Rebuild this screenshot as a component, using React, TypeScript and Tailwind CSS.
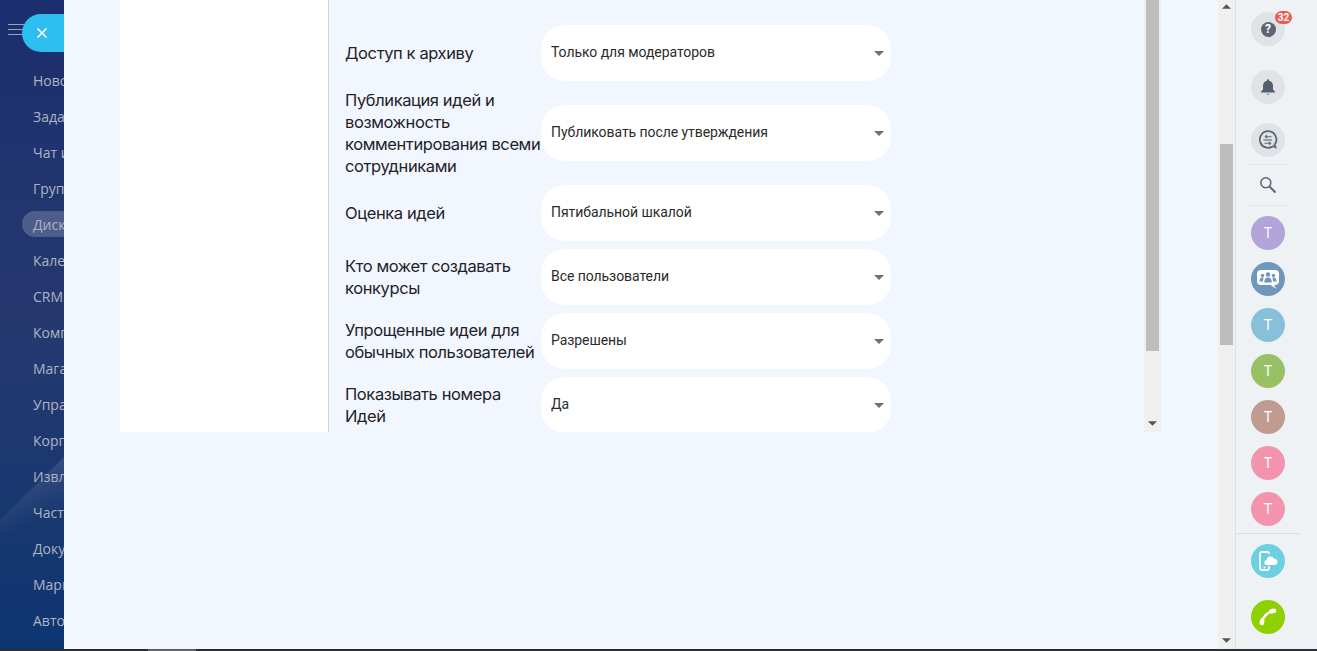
const navItems = ["Новости", "Задачи", "Чат и звонки", "Группы", "Диск", "Календарь", "CRM", "Компания", "Магазин", "Управление", "Корпорация", "Извлечение", "Частые", "Документы", "Маркетинг", "Автоматизация"];

const rows = [
  { label: "Доступ к архиву", value: "Только для модераторов" },
  { label: "Публикация идей и возможность комментирования всеми сотрудниками", value: "Публиковать после утверждения" },
  { label: "Оценка идей", value: "Пятибальной шкалой" },
  { label: "Кто может создавать конкурсы", value: "Все пользователи" },
  { label: "Упрощенные идеи для обычных пользователей", value: "Разрешены" },
  { label: "Показывать номера Идей", value: "Да" },
];

function Tri({ up, className }: { up?: boolean; className: string }) {
  return (
    <svg width="10" height="5" viewBox="0 0 10 5" className={className}>
      <path d={up ? "M5 0L10 5H0Z" : "M0 0H10L5 5Z"} fill="currentColor" />
    </svg>
  );
}

function Avatar({ color }: { color: string }) {
  return (
    <div className={`w-[34px] h-[34px] shrink-0 rounded-full flex items-center justify-center text-white text-[14px] mb-3 ${color}`}>
      Т
    </div>
  );
}

export default function App() {
  return (
    <div className="h-[651px] w-[1317px] flex flex-col overflow-hidden bg-[#f2f6fe] font-['Roboto',sans-serif]">
      <div className="flex h-[649px]">
        {/* left menu */}
        <aside className="relative w-16 shrink-0 overflow-hidden bg-gradient-to-b from-[#1b2e6d] via-[#25396f] to-[#0c3670] font-['Open_Sans',sans-serif]">
          <svg className="absolute left-0 top-[437px]" width="64" height="100" viewBox="0 0 64 100">
            <defs>
              <linearGradient id="shine" x1="0" y1="0" x2="0.4" y2="1">
                <stop offset="0.3" stopColor="#ffffff" stopOpacity="0.12" />
                <stop offset="0.9" stopColor="#ffffff" stopOpacity="0" />
              </linearGradient>
            </defs>
            <path d="M0 83L64 20V100H0Z" fill="url(#shine)" />
          </svg>
          <div className="relative flex items-center h-[62px]">
            <div className="ml-2 w-4 flex flex-col gap-1 -mt-1">
              <div className="h-px bg-[#9aa3bb]" />
              <div className="h-px bg-[#9aa3bb]" />
              <div className="h-px bg-[#9aa3bb]" />
            </div>
            <div className="absolute left-[22px] top-[14px] w-[60px] h-[38px] rounded-full bg-[#2ebef0] flex items-center pl-[14px]">
              <svg width="12" height="12" viewBox="0 0 12 12">
                <path d="M1.5 1.5L10.5 10.5M10.5 1.5L1.5 10.5" stroke="#fff" strokeWidth="1.6" />
              </svg>
            </div>
          </div>
          <nav className="relative flex flex-col">
            {navItems.map((n) => (
              <div key={n} className="relative h-9 flex items-center pl-[33px] text-[14px] text-[#adb3c3] whitespace-nowrap">
                {n === "Диск" && <div className="absolute left-[22px] top-[5px] w-[60px] h-[26px] rounded-full bg-white/20" />}
                <span className="relative">{n}</span>
              </div>
            ))}
          </nav>
        </aside>

        {/* center */}
        <main className="flex-1 min-w-0">
          <div className="ml-14 w-[1041px] h-[432px] flex">
            <div className="w-[208px] bg-white border-r border-[#cfd5dd] box-content" />
            <div className="flex-1 min-w-0 overflow-hidden pl-[16px] pt-[25px] flex flex-col gap-2">
              {rows.map((r) => (
                <div key={r.label} className="flex items-center shrink-0">
                  <div className="w-[196px] shrink-0 text-[16.5px] leading-[22px] text-[#1f2229] font-['Inter',sans-serif] tracking-[-0.4px]">{r.label}</div>
                  <div className="w-[350px] h-14 rounded-3xl bg-white flex items-center justify-between pl-[10px] pr-[7px] text-[14px] text-[#2b2b2b] tracking-[-0.06px]">
                    <span className="-mt-px">{r.value}</span>
                    <Tri className="text-[#6f6f6f] mt-px" />
                  </div>
                </div>
              ))}
            </div>
            <div className="w-[17px] shrink-0 bg-[#f0f0f0] relative">
              <div className="mx-[2px] w-[13px] h-[351px] bg-[#bdbdbd]" />
              <Tri className="absolute left-1 bottom-[6px] text-[#555] w-[9px]" />
            </div>
          </div>
        </main>

        {/* page scrollbar */}
        <div className="w-[17px] shrink-0 bg-[#f0f0f0] flex flex-col items-center relative">
          <Tri up className="text-[#555] mt-[4px] w-[9px]" />
          <div className="absolute left-[2px] top-[144px] w-[13px] h-[201px] bg-[#bdbdbd]" />
          <Tri className="absolute left-1 bottom-[6px] text-[#555] w-[9px]" />
        </div>

        {/* right bar */}
        <aside className="w-[82px] shrink-0 bg-[#eef2f4] border-l border-[#dde1e4] flex flex-col">
          <div className="w-[64px] flex flex-col items-center pt-3">
            <div className="relative w-[34px] h-[34px] rounded-full bg-[#dfe3e6] flex items-center justify-center mb-6">
              <div className="w-[15px] h-[15px] rounded-full bg-[#5b6573] text-white text-[12px] font-bold flex items-center justify-center">?</div>
              <div className="absolute -right-[7px] -top-[1px] h-[13px] w-[17px] text-center rounded-full bg-[#ee5a4e] text-white text-[10px] font-bold leading-[13px]">32</div>
            </div>
            <div className="w-[34px] h-[34px] rounded-full bg-[#dfe3e6] flex items-center justify-center mb-[18px]">
              <svg width="16" height="18" viewBox="0 0 16 18">
                <path d="M8 1.2a1.1 1.1 0 0 1 1.1 1.1v.5C11.6 3.4 13 5.400 13 8v3.500l2 2.200V14.500H1V13.700l2-2.200V8c0-2.600 1.400-4.600 3.900-5.200v-.5A1.100 1.100 0 0 1 8 1.200Z" fill="#545e6e" />
                <path d="M6.500 15.700h3L8 17Z" fill="#545e6e" />
              </svg>
            </div>
            <div className="w-[34px] h-[34px] rounded-full bg-[#dfe3e6] flex items-center justify-center mt-px">
              <svg width="20" height="20" viewBox="0 0 20 20" fill="none" stroke="#5b6573">
                <path d="M10 1.200a8.300 8.300 0 1 0 5 15l2.500 1-.9-2.600A8.300 8.300 0 0 0 10 1.200Z" strokeWidth="1.700" />
                <path d="M13.500 6.700H7.500M9 5.200L7.300 6.700L9 8.200" strokeWidth="1.100" />
                <path d="M5.500 10H14" strokeWidth="1.100" />
                <path d="M6.500 13.300H12.500M11 11.800L12.700 13.300L11 14.800" strokeWidth="1.100" />
              </svg>
            </div>
            <div className="w-[42px] h-px bg-[#e2e6e9] mt-[7px]" />
            <div className="h-10 flex items-center">
              <svg width="18" height="18" viewBox="0 0 18 18" fill="none" stroke="#5b6573">
                <circle cx="6.800" cy="6.800" r="5" strokeWidth="1.500" />
                <path d="M10.500 10.500L16.500 16.500" strokeWidth="2" />
              </svg>
            </div>
            <div className="w-[42px] h-px bg-[#e2e6e9] mb-[10px]" />
            <Avatar color="bg-[#b0a4d8]" />
            <div className="w-[34px] h-[34px] shrink-0 rounded-full bg-[#6f97be] flex items-center justify-center mb-3">
              <svg width="26" height="24" viewBox="0 0 26 24">
                <path d="M6 3h14a4 4 0 0 1 4 4v7a4 4 0 0 1-4 4h-1l2.500 4-6-4H6a4 4 0 0 1-4-4V7a4 4 0 0 1 4-4Z" fill="#fff" />
                <g fill="#6f97be">
                  <circle cx="13" cy="7.500" r="2.200" />
                  <path d="M9.300 15.500c0-3.400 1-5 3.700-5s3.700 1.600 3.700 5Z" />
                  <circle cx="7.500" cy="8.500" r="1.700" />
                  <path d="M4.500 14.500c0-2.800.8-4 3-4 .5 0 1 .1 1.300.3-.6 1-.9 2.200-.9 3.700Z" />
                  <circle cx="18.500" cy="8.500" r="1.700" />
                  <path d="M21.500 14.500c0-2.800-.8-4-3-4-.5 0-1 .1-1.300.3.600 1 .9 2.200.9 3.700Z" />
                </g>
              </svg>
            </div>
            <Avatar color="bg-[#87c0d8]" />
            <Avatar color="bg-[#98c064]" />
            <Avatar color="bg-[#c09c90]" />
            <Avatar color="bg-[#f394ae]" />
            <Avatar color="bg-[#f394ae] !mb-0" />
          </div>
          <div className="w-[65px] h-px bg-[#dde1e4] mt-[7px] mb-[10px]" />
          <div className="w-[64px] flex flex-col items-center">
            <div className="w-[34px] h-[34px] rounded-full bg-[#6dd0e2] flex items-center justify-center mb-[22px]">
              <svg width="22" height="22" viewBox="0 0 22 22">
                <path d="M12 4V3.500A1.500 1.500 0 0 0 10.500 2H4.500A1.500 1.500 0 0 0 3 3.500v15A1.500 1.500 0 0 0 4.500 20h6a1.500 1.500 0 0 0 1.500-1.500V16" fill="none" stroke="#fff" strokeWidth="1.800" />
                <circle cx="7.500" cy="17.500" r="1" fill="#fff" />
                <path d="M10 15a2.500 2.500 0 0 1-.4-5 3.800 3.800 0 0 1 7.300-1.200 3.100 3.100 0 0 1 .6 6.200Z" fill="#fff" />
              </svg>
            </div>
            <div className="w-[34px] h-[34px] rounded-full bg-[#8fd100] flex items-center justify-center">
              <svg width="20" height="20" viewBox="0 0 20 20" fill="none" stroke="#fff" strokeLinecap="round">
                <path d="M15.500 4C10 4.500 4.500 10 4 15.500" strokeWidth="2.400" />
                <path d="M13.500 4.300L16 3.800" strokeWidth="4.500" />
                <path d="M4.300 13.500L3.800 16" strokeWidth="4.500" />
              </svg>
            </div>
          </div>
        </aside>
      </div>
      <div className="h-[2px] bg-[#2a2d33] flex">
        <div className="w-[148px]" />
        <div className="w-12 bg-[#5f6267]" />
      </div>
    </div>
  );
}
